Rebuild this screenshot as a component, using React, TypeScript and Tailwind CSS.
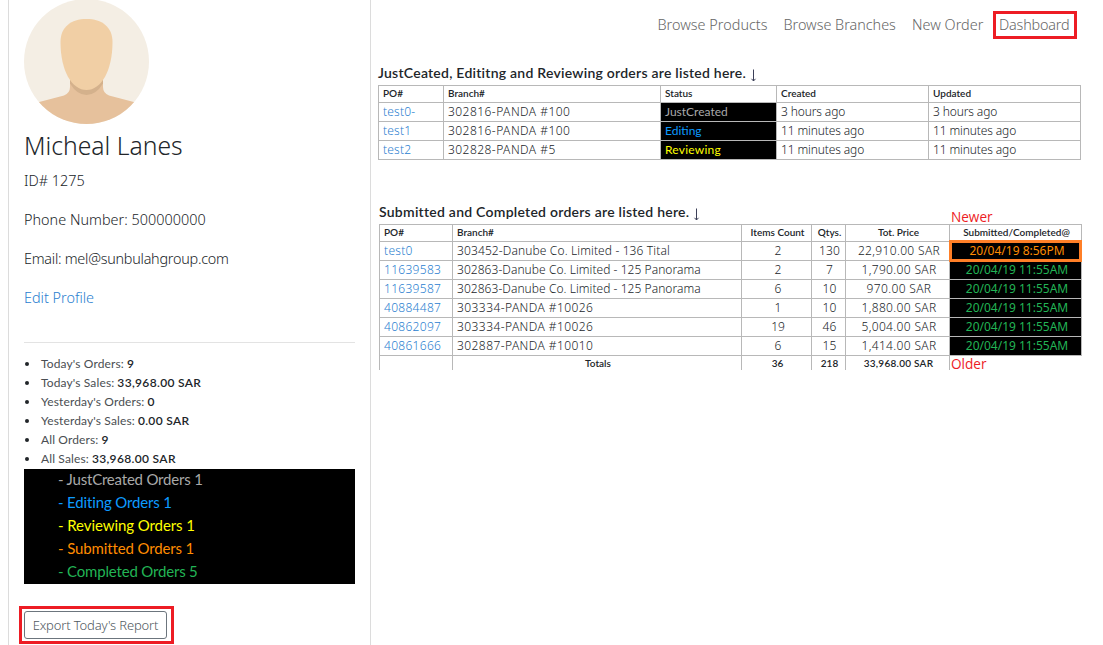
import type { ReactNode } from "react";

const navItems = [
  { label: "Browse Products", cls: "w-[126px] tracking-[0.02px]" },
  { label: "Browse Branches", cls: "w-[128.5px] tracking-[-0.02px]" },
  { label: "New Order", cls: "w-[81px] tracking-[0.02px]" },
];

const stats = [
  ["Today's Orders:", "9"],
  ["Today's Sales:", "33,968.00 SAR"],
  ["Yesterday's Orders:", "0"],
  ["Yesterday's Sales:", "0.00 SAR"],
  ["All Orders:", "9"],
  ["All Sales:", "33,968.00 SAR"],
];

const statusCounts = [
  { label: "- JustCreated Orders 1", cls: "text-[#a9a9a9] tracking-[-0.2px]" },
  { label: "- Editing Orders 1", cls: "text-[#0d9bff] tracking-[-0.15px]" },
  { label: "- Reviewing Orders 1", cls: "text-[#ffff00] tracking-[-0.08px]" },
  { label: "- Submitted Orders 1", cls: "text-[#ff8c00] tracking-[-0.13px]" },
  { label: "- Completed Orders 5", cls: "text-[#22b455] tracking-[-0.18px]" },
];

const openOrders = [
  { po: "test0-", branch: "302816-PANDA #100", status: "JustCreated", color: "text-[#a9a9a9]", time: "3 hours ago" },
  { po: "test1", branch: "302816-PANDA #100", status: "Editing", color: "text-[#0d9bff]", time: "11 minutes ago" },
  { po: "test2", branch: "302828-PANDA #5", status: "Reviewing", color: "text-[#ffff00] tracking-[0.23px]", time: "11 minutes ago" },
];

const closedOrders = [
  ["test0", "303452-Danube Co. Limited - 136 Tital", "2", "130", "22,910.00 SAR", "20/04/19 8:56PM"],
  ["11639583", "302863-Danube Co. Limited - 125 Panorama", "2", "7", "1,790.00 SAR", "20/04/19 11:55AM"],
  ["11639587", "302863-Danube Co. Limited - 125 Panorama", "6", "10", "970.00 SAR", "20/04/19 11:55AM"],
  ["40884487", "303334-PANDA #10026", "1", "10", "1,880.00 SAR", "20/04/19 11:55AM"],
  ["40862097", "303334-PANDA #10026", "19", "46", "5,004.00 SAR", "20/04/19 11:55AM"],
  ["40861666", "302887-PANDA #10010", "6", "15", "1,414.00 SAR", "20/04/19 11:55AM"],
];

function Cell({ className = "", children }: { className?: string; children?: ReactNode }) {
  return <div className={`border-r border-b border-[#b8b8b8] whitespace-nowrap ${className}`}>{children}</div>;
}

function Avatar() {
  return (
    <svg viewBox="0 0 125 125" className="-mt-px block size-[125px]">
      <defs>
        <clipPath id="avatar-circle">
          <circle cx="62.5" cy="62.5" r="62.5" />
        </clipPath>
      </defs>
      <g clipPath="url(#avatar-circle)">
        <rect width="125" height="125" fill="#f4eee4" />
        <path d="M46 78V88Q46 94 40 96.500L0 107V125H125V107L85 96.500Q79 94 79 88V78Z" fill="#e6c19c" />
        <path d="M46 80V84.500Q53 96 62.500 96Q72 96 79 84.500V80Z" fill="#d4b18c" />
        <path d="M62.500 20C78 20 88.500 28 88.500 43C88.500 72 77 91 62.500 91C48 91 36.500 72 36.500 43C36.500 28 47 20 62.500 20Z" fill="#f1cfa5" />
      </g>
    </svg>
  );
}

function Arrow() {
  return (
    <svg width="8" height="13" viewBox="0 0 8 13" fill="none" className="mt-[4px] ml-[3px]">
      <path d="M4.500 0.500V12M2.500 9.800L4.500 12L6.500 9.800" stroke="#3c4058" strokeWidth="1" />
    </svg>
  );
}

function Sidebar() {
  return (
    <aside className="h-[645px] w-[363px] shrink-0 border-x border-[#dcdcdc] pr-[15px] pl-[15px]">
      <Avatar />
      <h1 className="mt-[6px] text-[24.7px] leading-[32px] font-light">Micheal Lanes</h1>
      <div className="mt-[8px] text-[14.4px] leading-[22px] font-light tracking-[-0.25px]">
        <p className="tracking-[0px]">ID# 1275</p>
        <p className="mt-[17px] tracking-[0.02px]">Phone Number: 500000000</p>
        <p className="mt-[17px]">Email: mel@sunbulahgroup.com</p>
        <p className="mt-[17px] tracking-[0px] text-[#2a80d0]">Edit Profile</p>
      </div>
      <hr className="mt-[33px] border-[#e3e3e3]" />
      <ul className="mt-[11px] mb-px text-[12px] leading-[19px]">
        {stats.map(([label, value]) => (
          <li key={label} className="flex items-center">
            <span className="mt-px ml-px size-[4px] rounded-full bg-[#212529]" />
            <span className="ml-[12px] font-['Lato'] tracking-[0.13px] text-[#4a4e52]">{label}</span>
            <span className="ml-[3px] font-['Lato'] font-semibold tracking-[0.34px]">{value}</span>
          </li>
        ))}
      </ul>
      <div className="h-[115px] bg-black">
        <ul className="-translate-y-px pl-[34px] font-['Lato'] text-[15px] leading-[23px]">
          {statusCounts.map((s) => (
            <li key={s.label} className={s.cls}>{s.label}</li>
          ))}
        </ul>
      </div>
      <div className="mt-[22px] -ml-[5px] h-[38px] w-[155px] border-3 border-[#ed1c24] p-[2px]">
        <button className="block h-[28px] w-[143px] rounded-[3px] border border-[#6c757d] pb-px text-[13px] leading-[24px] font-light tracking-[-0.15px] whitespace-nowrap text-[#4f5860]">
          Export Today's Report
        </button>
      </div>
    </aside>
  );
}

function OpenOrders() {
  const head = "pl-[4px] font-['Lato'] text-[10px] font-semibold leading-[15px] h-[17px]";
  const body = "h-[19px] pl-[4px] text-[12px] font-light leading-[18px]";
  return (
    <section className="pl-[7px]">
      <h2 className="flex h-[20px] font-['Lato'] text-[14px] leading-[16px] font-semibold tracking-[0.24px]">
        JustCeated, Edititng and Reviewing orders are listed here. <Arrow />
      </h2>
      <div className="grid w-[703px] grid-cols-[65px_217px_116px_152px_152px] border-t border-l border-[#b8b8b8]">
        <Cell className={head}>PO#</Cell>
        <Cell className={head}>Branch#</Cell>
        <Cell className={head}>Status</Cell>
        <Cell className={head}>Created</Cell>
        <Cell className={head}>Updated</Cell>
        {openOrders.map((o) => (
          <div key={o.po} className="contents">
            <Cell className={`${body} tracking-[0.2px] text-[#2a80d0]`}>{o.po}</Cell>
            <Cell className={`${body} tracking-[0.46px]`}>{o.branch}</Cell>
            <Cell className={`h-[19px] bg-black pl-[4px] font-['Lato'] text-[12px] leading-[18px] ${o.color}`}>{o.status}</Cell>
            <Cell className={`${body} tracking-[-0.12px]`}>{o.time}</Cell>
            <Cell className={`${body} tracking-[-0.12px]`}>{o.time}</Cell>
          </div>
        ))}
      </div>
    </section>
  );
}

function ClosedOrders() {
  const head = "font-['Lato'] text-[10px] font-semibold leading-[15px] h-[17px]";
  const body = "h-[19px] text-[12px] font-light leading-[18px]";
  const total = "h-[14px] border-b-0 pl-[2px] text-center font-['Lato'] text-[10px] font-semibold leading-[15px]";
  return (
    <section className="relative mt-[43px] pl-[8px]">
      <h2 className="flex h-[20px] font-['Lato'] text-[14px] leading-[16px] font-semibold tracking-[0.25px]">
        Submitted and Completed orders are listed here. <Arrow />
      </h2>
      <div className="grid w-[703px] grid-cols-[73px_289px_70px_34px_104px_132px] border-t border-l border-[#b8b8b8]">
        <Cell className={`${head} pl-[4px]`}>PO#</Cell>
        <Cell className={`${head} pl-[4px]`}>Branch#</Cell>
        <Cell className={`${head} pl-[2px] text-center`}>Items Count</Cell>
        <Cell className={`${head} pl-[2px] text-center`}>Qtys.</Cell>
        <Cell className={`${head} pl-[2px] text-center`}>Tot. Price</Cell>
        <Cell className={`${head} pl-[2px] text-center`}>Submitted/Completed@</Cell>
        {closedOrders.map(([po, branch, items, qty, price, date], i) => (
          <div key={po} className="contents">
            <Cell className={`${body} pl-[4px] tracking-[0.3px] text-[#2a80d0]`}>{po}</Cell>
            <Cell className={`${body} pl-[4px] ${branch.includes("PANDA") ? "tracking-[0.43px]" : branch.includes("Tital") ? "tracking-[0.12px]" : "tracking-[0.05px]"}`}>{branch}</Cell>
            <Cell className={`${body} pl-[3px] text-center`}>{items}</Cell>
            <Cell className={`${body} pl-[2px] text-center tracking-[0.2px]`}>{qty}</Cell>
            <Cell className={`${body} pl-[3px] text-center tracking-[0.34px]`}>{price}</Cell>
            <Cell className={`h-[19px] bg-black pl-[3px] text-center text-[12px] leading-[18px] ${i === 0 ? "text-[#ff8c00]" : "text-[#22b455]"}`}>{date}</Cell>
          </div>
        ))}
        <Cell className={total} />
        <Cell className={total}>Totals</Cell>
        <Cell className={total}>36</Cell>
        <Cell className={total}>218</Cell>
        <Cell className={`${total} tracking-[0.25px]`}>33,968.00 SAR</Cell>
      </div>
      <div className="absolute top-[36px] left-[578px] h-[22px] w-[133px] border-3 border-[#ff7f27]" />
      <span className="absolute top-[3px] left-[580px] font-['Open_Sans'] text-[13.6px] leading-[20px] text-[#ed1c24]">Newer</span>
      <span className="absolute top-[150px] left-[580px] font-['Open_Sans'] text-[13.6px] leading-[20px] text-[#ed1c24]">Older</span>
    </section>
  );
}

export default function App() {
  return (
    <div className="flex h-[645px] w-[1103px] overflow-hidden bg-white pl-[8px] font-['Noto_Sans',sans-serif] text-[#212529]">
      <Sidebar />
      <main className="w-[732px]">
        <nav className="flex h-[65px] justify-end pt-[11px] pr-[26px] text-[14.4px] leading-[28px] font-light text-[#666666]">
          {navItems.map((n) => (
            <a key={n.label} className={`whitespace-nowrap ${n.cls}`}>{n.label}</a>
          ))}
          <a className="h-[28px] w-[84px] border-3 border-[#ed1c24] pl-[3px] leading-[22px] tracking-[-0.18px]">Dashboard</a>
        </nav>
        <OpenOrders />
        <div className="h-[1px]" />
        <ClosedOrders />
      </main>
    </div>
  );
}
